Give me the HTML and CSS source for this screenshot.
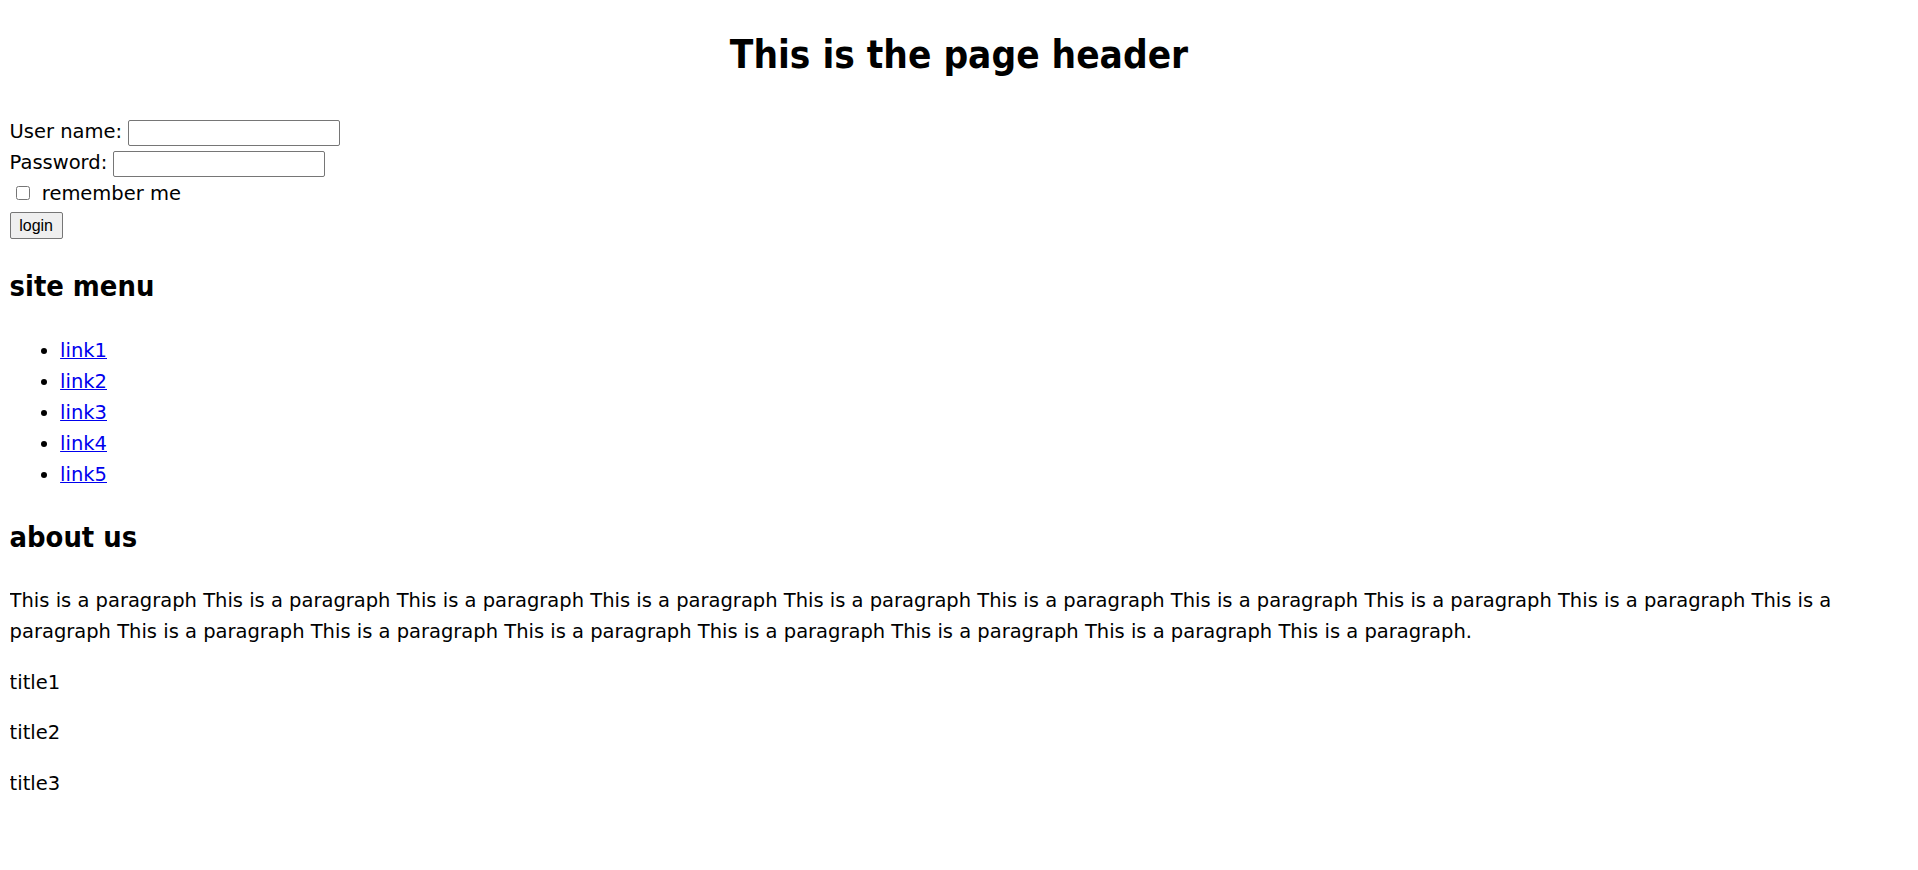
FILE: index.html
```html
<!DOCTYPE html>
<html>
<head>
<meta charset="utf-8">
<title>Page</title>
<link rel="stylesheet" href="styles.css">
</head>
<body>
<h1 class="page-header">This is the page header</h1>
<form class="login-form">
  User name: <input type="text" class="field"><br>
  Password: <input type="password" class="field"><br>
  <input type="checkbox" class="check"> remember me<br>
  <button type="button" class="btn">login</button>
</form>
<h2 class="section-title">site menu</h2>
<ul class="menu">
  <li><a href="#">link1</a></li>
  <li><a href="#">link2</a></li>
  <li><a href="#">link3</a></li>
  <li><a href="#">link4</a></li>
  <li><a href="#">link5</a></li>
</ul>
<h2 class="section-title">about us</h2>
<p class="text">This is a paragraph This is a paragraph This is a paragraph This is a paragraph This is a paragraph This is a paragraph This is a paragraph This is a paragraph This is a paragraph This is a paragraph This is a paragraph This is a paragraph This is a paragraph This is a paragraph This is a paragraph This is a paragraph This is a paragraph.</p>
<p class="text">title1</p>
<p class="text">title2</p>
<p class="text">title3</p>
</body>
</html>
```
FILE: styles.css
```css
html, body {
  background: #ffffff;
}
body {
  margin: 9.6px;
  font-family: "DejaVu Sans", sans-serif;
  font-size: 19.5px;
  line-height: 31px;
  color: #000000;
}
.page-header {
  font-family: "DejaVu Sans Condensed", "DejaVu Sans", sans-serif;
  font-size: 38.4px;
  font-weight: bold;
  text-align: center;
  margin: 18px 0 34.4px;
  line-height: 54px;
}
.login-form {
  margin: 0;
}
.field {
  width: 212px;
  height: 26px;
  box-sizing: border-box;
  border: 1px solid #767676;
  border-radius: 2px;
  font-family: "Liberation Sans", sans-serif;
  font-size: 16px;
  padding: 1px 2px;
  margin: 0;
  vertical-align: baseline;
}
.check {
  width: 14px;
  height: 14px;
  margin: 0 6px 0 6px;
}
.btn {
  font-family: "Liberation Sans", sans-serif;
  font-size: 16px;
  width: 53px;
  height: 27px;
  padding: 0;
  background: #efefef;
  border: 1px solid #767676;
  border-radius: 2px;
  color: #000000;
}
.section-title {
  font-family: "DejaVu Sans Condensed", "DejaVu Sans", sans-serif;
  font-size: 28.8px;
  font-weight: bold;
  margin: 24.4px 0 26.8px;
  line-height: 44px;
}
.menu {
  margin: 19.2px 0;
  padding-left: 50.5px;
}
.menu a {
  color: #0000ee;
  text-decoration: underline;
}
.text {
  margin: 19.5px 0;
}
```
